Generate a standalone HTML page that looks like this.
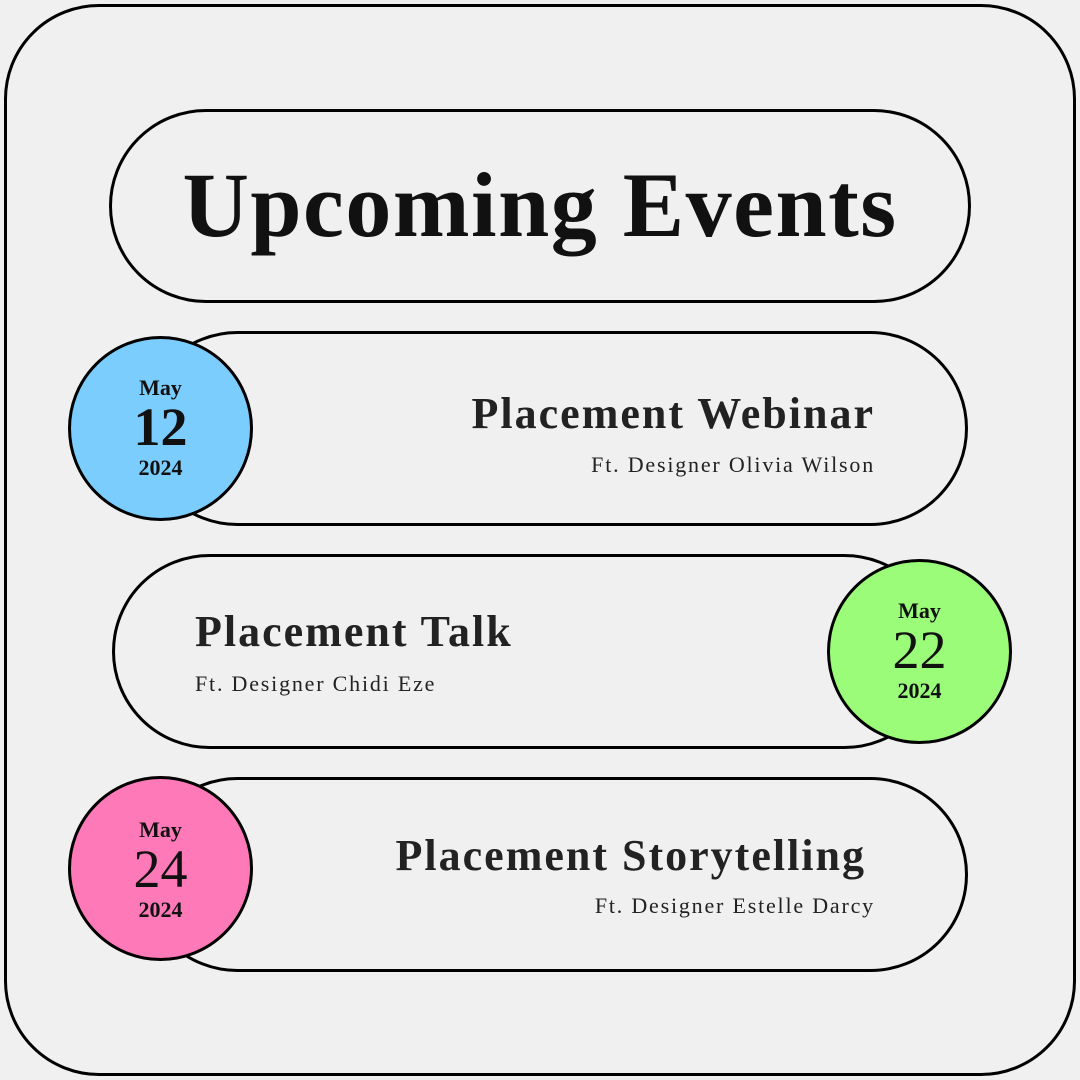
<!DOCTYPE html>
<html><head><style>
body{margin:0;width:1080px;height:1080px;background:#f0f0f0;position:relative;overflow:hidden;font-family:"Liberation Serif",serif;color:#111}
.a{position:absolute;box-sizing:border-box;border:3px solid #000}
.pill{border-radius:100px;background:#f0f0f0}
.c{border-radius:50%;text-align:center}
.t{position:absolute;font-weight:bold;white-space:nowrap;letter-spacing:2px}
.s{position:absolute;white-space:nowrap;font-size:22px;letter-spacing:1.8px;color:#222}
.m{position:absolute;left:0;width:100%;font-weight:bold}
</style></head><body>
<div class="a" style="left:4px;top:4px;width:1072px;height:1072px;border-radius:95px"></div>
<div class="a pill" style="left:109px;top:109px;width:862px;height:194px"></div>
<div class="t" style="left:175px;top:150px;width:730px;font-size:92px;line-height:110px;text-align:center;letter-spacing:1.5px">Upcoming Events</div>

<div class="a pill" style="left:140px;top:331px;width:828px;height:195px"></div>
<div class="a c" style="left:68px;top:336px;width:185px;height:185px;background:#7acdfd">
<div class="m" style="top:36px;font-size:22px">May</div>
<div class="m" style="top:58px;font-size:54px;line-height:60px">12</div>
<div class="m" style="top:116px;font-size:22px">2024</div></div>
<div class="t" style="right:205px;top:388px;font-size:44px;color:#222">Placement Webinar</div>
<div class="s" style="right:205px;top:452px">Ft. Designer Olivia Wilson</div>

<div class="a pill" style="left:112px;top:554px;width:830px;height:195px"></div>
<div class="a c" style="left:827px;top:559px;width:185px;height:185px;background:#9afc78">
<div class="m" style="top:36px;font-size:22px">May</div>
<div class="m" style="top:58px;font-size:54px;line-height:60px;font-weight:normal">22</div>
<div class="m" style="top:116px;font-size:22px">2024</div></div>
<div class="t" style="left:195px;top:606px;font-size:44px;color:#222">Placement Talk</div>
<div class="s" style="left:195px;top:671px">Ft. Designer Chidi Eze</div>

<div class="a pill" style="left:140px;top:777px;width:828px;height:195px"></div>
<div class="a c" style="left:68px;top:776px;width:185px;height:185px;background:#fd79b8">
<div class="m" style="top:38px;font-size:22px">May</div>
<div class="m" style="top:60px;font-size:54px;line-height:60px;font-weight:normal">24</div>
<div class="m" style="top:118px;font-size:22px">2024</div></div>
<div class="t" style="right:214px;top:830px;font-size:44px;color:#222">Placement Storytelling</div>
<div class="s" style="right:205px;top:893px">Ft. Designer Estelle Darcy</div>
</body></html>
